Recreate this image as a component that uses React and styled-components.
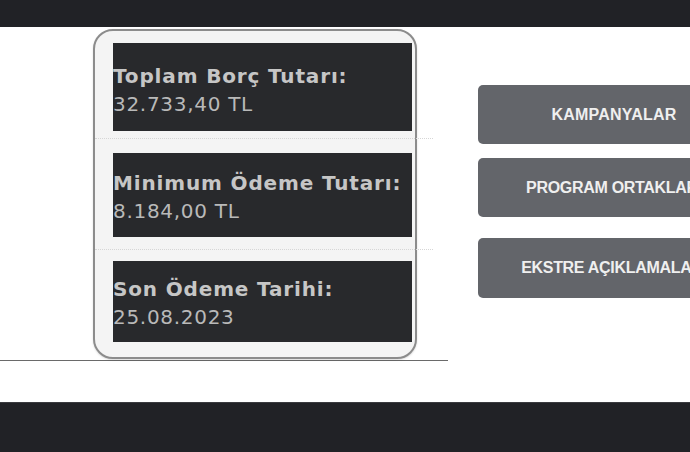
import React from 'react';
import styled, { createGlobalStyle } from 'styled-components';

const GlobalStyle = createGlobalStyle`
	html, body {
		margin: 0;
		padding: 0;
		overflow: hidden;
		background: #ffffff;
	}
	* {
		box-sizing: border-box;
	}
`;

const Page = styled.div`
	width: 690px;
	height: 452px;
	display: flex;
	flex-direction: column;
	overflow: hidden;
`;

const TopBar = styled.div`
	height: 27px;
	flex-shrink: 0;
	background-color: #212226;
`;

const BottomBar = styled.div`
	height: 50px;
	flex-shrink: 0;
	background-color: #212226;
	border-top: 1px solid #3a3b3f;
`;

const Main = styled.div`
	flex: 1;
	display: flex;
	flex-direction: row;
	background-color: #ffffff;
`;

const LeftPane = styled.div`
	width: 448px;
	flex-shrink: 0;
`;

const CardArea = styled.div`
	padding: 2px 0 0 93px;
	border-bottom: 1px solid #6a6a6a;
	height: 334px;
`;

const Card = styled.div`
	width: 324px;
	height: 330px;
	border: 2px solid #8c8c8c;
	border-radius: 20px;
	background-color: #f4f4f4;
	padding: 12px 3px 0 18px;
	display: flex;
	flex-direction: column;
	box-shadow: 0 1px 2px rgb(0 0 0 / 15%);
`;

const Divider = styled.div`
	height: 1px;
	margin: ${props => props.$above}px -21px ${props => props.$below}px -18px;
	border-top: 1px dotted #d6d6d6;
`;

const InfoBox = styled.div`
	height: ${props => props.$h}px;
	background-color: #28292c;
	display: flex;
	flex-direction: column;
	justify-content: center;
	padding-top: ${props => props.$shift}px;
	font-family: "DejaVu Sans", Verdana, sans-serif;
	font-size: 20px;
	line-height: 28px;
	white-space: nowrap;
`;

const Label = styled.div`
	font-weight: bold;
	letter-spacing: 0.85px;
	color: #c6c6c6;
`;

const Value = styled.div`
	letter-spacing: 0.7px;
	color: #b9b9b9;
`;

const RightPane = styled.div`
	flex: 1;
	padding: 58px 0 0 30px;
	display: flex;
	flex-direction: column;
	overflow: hidden;
`;

const MenuButton = styled.button`
	width: 272px;
	height: ${props => props.$h || 59}px;
	margin-bottom: ${props => props.$gap || 0}px;
	flex-shrink: 0;
	border: none;
	border-radius: 5px;
	background-color: #63656a;
	color: #efefef;
	font-family: "Liberation Sans", Arial, sans-serif;
	font-weight: bold;
	font-size: 16px;
	letter-spacing: ${props => props.$spacing ?? -0.3}px;
	white-space: nowrap;
	display: flex;
	align-items: center;
	justify-content: center;
	padding: 0;
	&:hover {
		cursor: pointer;
	}
`;

const items = [
	{ label: 'Toplam Borç Tutarı:', value: '32.733,40 TL', h: 88, shift: 5 },
	{ label: 'Minimum Ödeme Tutarı:', value: '8.184,00 TL', h: 84, shift: 3 },
	{ label: 'Son Ödeme Tarihi:', value: '25.08.2023', h: 81, shift: 3 },
];

const dividers = [
	{ above: 7, below: 14 },
	{ above: 12, below: 11 },
];

const App = () => {
	return (
		<>
			<GlobalStyle />
			<Page>
				<TopBar />
				<Main>
					<LeftPane>
						<CardArea>
							<Card>
								{items.map((item, i) => (
									<React.Fragment key={item.label}>
										<InfoBox $h={item.h} $shift={item.shift}>
											<Label>{item.label}</Label>
											<Value>{item.value}</Value>
										</InfoBox>
										{dividers[i] && (
											<Divider $above={dividers[i].above} $below={dividers[i].below} />
										)}
									</React.Fragment>
								))}
							</Card>
						</CardArea>
					</LeftPane>
					<RightPane>
						<MenuButton $gap={14} $spacing={0.2}>KAMPANYALAR</MenuButton>
						<MenuButton $gap={21}>PROGRAM ORTAKLARI</MenuButton>
						<MenuButton $h={60}>EKSTRE AÇIKLAMALARI</MenuButton>
					</RightPane>
				</Main>
				<BottomBar />
			</Page>
		</>
	);
};

export default App;
